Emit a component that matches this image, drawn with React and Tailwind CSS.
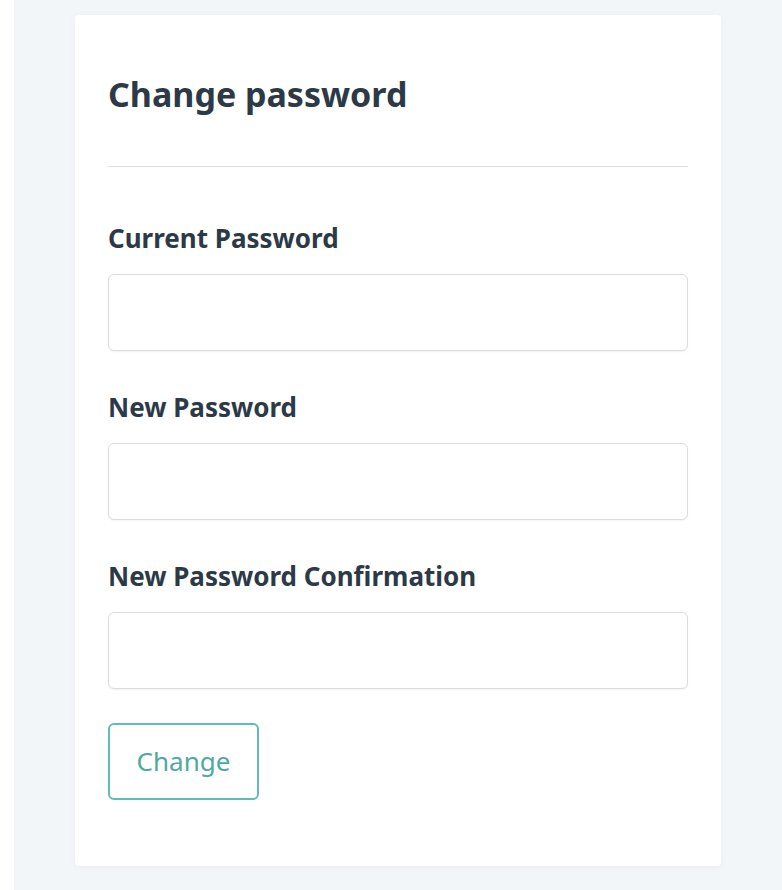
import React, { useState } from 'react'

const fields = [
  { name: 'current', label: 'Current Password' },
  { name: 'password', label: 'New Password' },
  { name: 'confirmation', label: 'New Password Confirmation' },
]

const App = () => {
  const [form, setForm] = useState({ current: '', password: '', confirmation: '' })

  const handleChange = (e) => {
    const { name, value } = e.target
    setForm(prev => ({ ...prev, [name]: value }))
  }

  return (
    <div className="flex min-h-[890px] bg-white font-['Noto_Sans',sans-serif]">
      <div className="w-[14px] shrink-0 bg-white" />
      <div className="flex-1 bg-[#f3f6f9] pl-[61px] pt-[15px]">
        <div className="w-[646px] h-[851px] bg-white rounded-[4px] shadow-[0_1px_6px_rgba(30,60,90,0.05)] px-[33px] pt-[59px]">
          <h2 className="text-[34px] leading-[40px] font-bold text-[#2c3a47]">Change password</h2>
          <div className="mt-[52px] h-px bg-[#dcdfe2]" />

          <form onSubmit={(e) => e.preventDefault()} className="pt-[55px] flex flex-col gap-[40px]">
            {fields.map(field => (
              <div key={field.name}>
                <label className="block text-[26px] leading-[32px] font-bold text-[#2c3a47] mb-[20px]">{field.label}</label>
                <input
                  type="password"
                  name={field.name}
                  value={form[field.name]}
                  onChange={handleChange}
                  className="block w-full h-[77px] px-4 border border-[#dcdcdc] rounded-[6px] bg-white shadow-[0_1px_2px_rgba(0,0,0,0.05)] focus:outline-none"
                />
              </div>
            ))}

            <div className="-mt-[6px]">
              <button
                type="submit"
                className="w-[151px] h-[77px] border-2 border-[#5fbdb3] rounded-[6px] text-[26px] text-[#4fa9a0] bg-white"
              >
                Change
              </button>
            </div>
          </form>
        </div>
      </div>
    </div>
  )
}

export default App
